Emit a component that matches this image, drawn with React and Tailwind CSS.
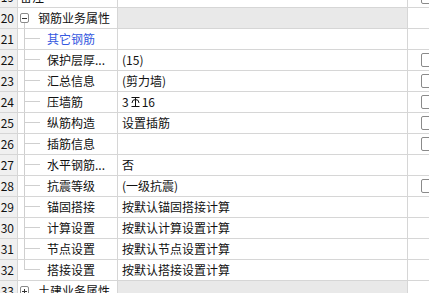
import React from "react";

const rows = [
  { no: 19, name: "备注", kind: "plain", value: "", check: true },
  { no: 20, name: "钢筋业务属性", kind: "group", open: true },
  { no: 21, name: "其它钢筋", kind: "child", link: true, value: "" },
  { no: 22, name: "保护层厚...", kind: "child", value: "(15)", check: true },
  { no: 23, name: "汇总信息", kind: "child", value: "(剪力墙)", check: true },
  { no: 24, name: "压墙筋", kind: "child", value: "steel", check: true },
  { no: 25, name: "纵筋构造", kind: "child", value: "设置插筋", check: true },
  { no: 26, name: "插筋信息", kind: "child", value: "", check: true },
  { no: 27, name: "水平钢筋...", kind: "child", value: "否" },
  { no: 28, name: "抗震等级", kind: "child", value: "(一级抗震)", check: true },
  { no: 29, name: "锚固搭接", kind: "child", value: "按默认锚固搭接计算" },
  { no: 30, name: "计算设置", kind: "child", value: "按默认计算设置计算" },
  { no: 31, name: "节点设置", kind: "child", value: "按默认节点设置计算" },
  { no: 32, name: "搭接设置", kind: "child", value: "按默认搭接设置计算", last: true },
  { no: 33, name: "土建业务属性", kind: "group", open: false },
];

// HRB400 rebar symbol
const SteelMark = () => (
  <svg width="11" height="12" viewBox="0 0 11 12" className="mx-[1px]">
    <line x1="1.5" y1="1.5" x2="9.5" y2="1.5" stroke="#111" strokeWidth="1" />
    <path d="M2 7 A3.5 3.5 0 0 1 9 7" fill="none" stroke="#111" strokeWidth="1" />
    <line x1="5.5" y1="1.5" x2="5.5" y2="11" stroke="#111" strokeWidth="1" />
    <line x1="1.5" y1="10.5" x2="9.5" y2="10.5" stroke="#111" strokeWidth="1" />
  </svg>
);

const ExpandBox = ({ open }) => (
  <div className="w-[9px] h-[10px] border border-[#8a8a8a] rounded-[2px] flex items-center justify-center bg-white relative">
    <div className="w-[5px] h-px bg-[#333]" />
    {!open && <div className="absolute w-px h-[5px] bg-[#333]" />}
  </div>
);

const NameCell = ({ row }) => {
  if (row.kind === "group") {
    return (
      <div className="flex items-center h-full pl-[2px]">
        <div className="relative h-full flex items-center">
          <ExpandBox open={row.open} />
          {row.open && (
            <div className="absolute left-[4px] top-[15px] bottom-[-1px] w-px bg-[#cfcfcf]" />
          )}
        </div>
        <span className="ml-[9px] whitespace-nowrap">{row.name}</span>
      </div>
    );
  }
  if (row.kind === "child") {
    return (
      <div className="flex items-center h-full pl-[6px]">
        <div className={`w-[16px] self-stretch flex flex-col ${row.last ? "" : "border-l border-[#cfcfcf]"} -mb-px`}>
          <div className={`h-[10px] border-b border-[#cfcfcf] ${row.last ? "border-l" : ""}`} />
        </div>
        <span
          className={`ml-[7px] whitespace-nowrap ${row.link ? "text-[#3558e0]" : ""}`}
        >
          {row.name}
        </span>
      </div>
    );
  }
  return (
    <div className="flex items-center h-full pl-[2px] whitespace-nowrap">{row.name}</div>
  );
};

export default function App() {
  return (
    <div
      className="w-[429px] h-[293px] overflow-hidden bg-white text-[12px] text-[#111]"
      style={{ fontFamily: '"Noto Sans CJK SC", "Noto Sans", sans-serif' }}
    >
      <div className="-mt-[13px]">
        {rows.map((row) => (
          <div key={row.no} className="flex h-[21px] border-b border-[#d6d6d6]">
            <div className="w-[18px] shrink-0 bg-[#f0f0f0] border-r border-[#d6d6d6] flex items-center justify-end pr-[3px]">
              {row.no}
            </div>
            <div className="w-[100px] shrink-0 border-r border-[#d6d6d6] overflow-hidden">
              <NameCell row={row} />
            </div>
            <div
              className={`w-[290px] shrink-0 border-r border-[#d6d6d6] flex items-center pl-[4px] whitespace-nowrap ${
                row.kind === "group" ? "bg-[#e9e9e9]" : ""
              }`}
            >
              {row.value === "steel" ? (
                <span className="flex items-center">
                  3<SteelMark />16
                </span>
              ) : (
                row.value
              )}
            </div>
            <div className="flex-1 flex items-center pl-[13px]">
              {row.check && (
                <div className="w-[14px] h-[14px] shrink-0 border border-[#8a8a8a] rounded-[2px] bg-white" />
              )}
            </div>
          </div>
        ))}
      </div>
    </div>
  );
}
